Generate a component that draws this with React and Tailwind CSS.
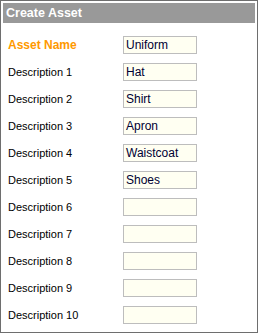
import React from "react";

const rows = [
  { label: "Asset Name", value: "Uniform", main: true },
  { label: "Description 1", value: "Hat" },
  { label: "Description 2", value: "Shirt" },
  { label: "Description 3", value: "Apron" },
  { label: "Description 4", value: "Waistcoat" },
  { label: "Description 5", value: "Shoes" },
  { label: "Description 6", value: "" },
  { label: "Description 7", value: "" },
  { label: "Description 8", value: "" },
  { label: "Description 9", value: "" },
  { label: "Description 10", value: "" },
];

export default function App() {
  return (
    <div className="w-[259px] h-[335px] bg-white font-['Liberation_Sans',sans-serif]">
      <div className="w-[258px] h-[333px] border border-[#6e6e6e] p-[2px]">
        {/* Header */}
        <div className="h-[20px] bg-[#999999] flex items-center pl-[3px] text-white font-bold text-[12.5px] w-[252px]">
          Create Asset
        </div>

        {/* Form */}
        <div className="flex flex-col gap-[9px] pt-[13px]">
          {rows.map((r) => (
            <div key={r.label} className="flex items-center h-[18px]">
              <div
                className={
                  r.main
                    ? "w-[120px] pl-[5px] text-[12px] font-bold text-[#ff9900]"
                    : "w-[120px] pl-[5px] text-[11px] text-black"
                }
              >
                {r.label}
              </div>
              <div className="w-[74px] h-[18px] border border-[#bdbdbd] bg-[#fffff2] flex items-center pl-[2px] text-[12px] text-[#000033]">
                {r.value}
              </div>
            </div>
          ))}
        </div>
      </div>
    </div>
  );
}
